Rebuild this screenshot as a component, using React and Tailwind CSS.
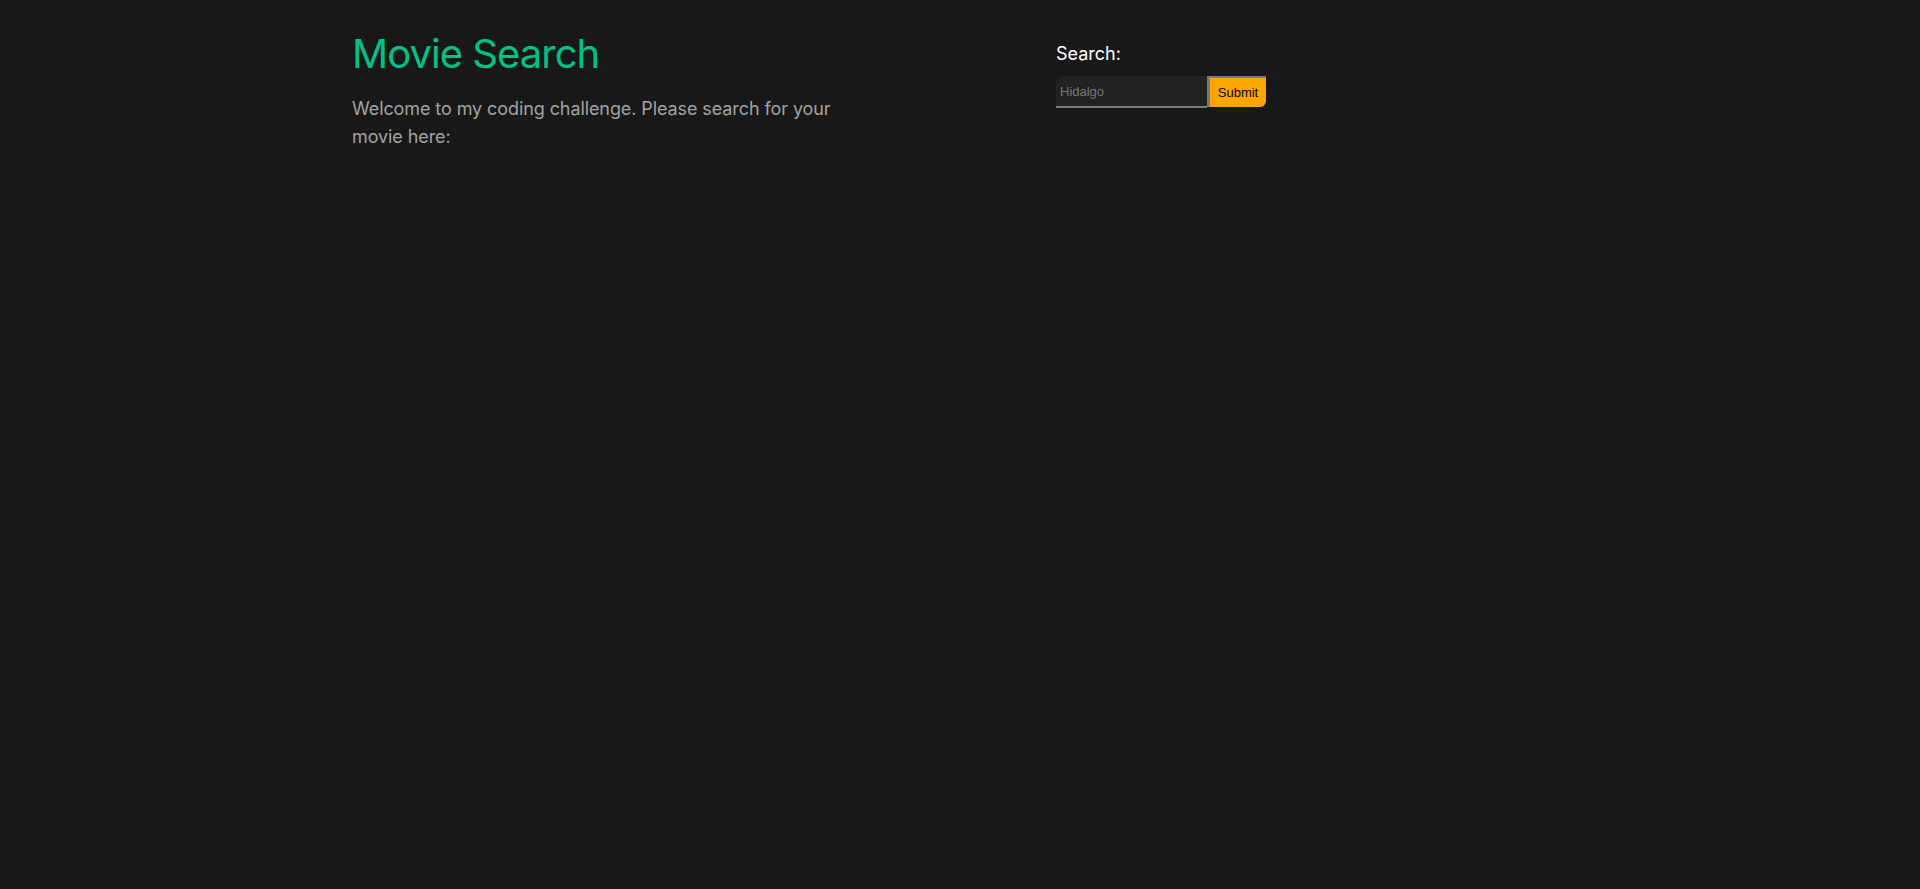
import React, { useState } from "react";

export default function App() {
  const [query, setQuery] = useState("");

  return (
    <div className="min-h-screen bg-[#181818] font-['Inter',sans-serif]">
      <div className="mx-auto flex w-[1216px] pt-[34px]">
        {/* Intro */}
        <div className="w-[704px]">
          <h1 className="text-[40px] leading-none font-normal tracking-[-0.024em] text-[#00c285]">Movie Search</h1>
          <p className="mt-[21px] max-w-[490px] text-[18px] leading-[28px] tracking-[-0.005em] text-[#a3a3a3]">
            Welcome to my coding challenge. Please search for your movie here:
          </p>
        </div>

        {/* Search form */}
        <form className="-mt-[28px] pt-[34px]" onSubmit={(e) => e.preventDefault()}>
          <label className="block text-[18px] leading-[28px] text-white">Search:</label>
          <div className="mt-[8px] flex">
            <input
              value={query}
              onChange={(e) => setQuery(e.target.value)}
              placeholder="Hidalgo"
              className="h-[32px] w-[151px] rounded-tl-[6px] border-b-2 border-[#7a7a7a] bg-[#222222] px-[4px] font-['Liberation_Sans',sans-serif] text-[13px] text-white placeholder:text-[#777777] outline-none"
            />
            <button
              type="submit"
              className="h-[31px] w-[59px] rounded-br-[6px] border-t-2 border-l-[3px] border-[#7a7a7a] bg-[#ffa500] font-['Liberation_Sans',sans-serif] text-[13px] text-black"
            >
              Submit
            </button>
          </div>
        </form>
      </div>
    </div>
  );
}
